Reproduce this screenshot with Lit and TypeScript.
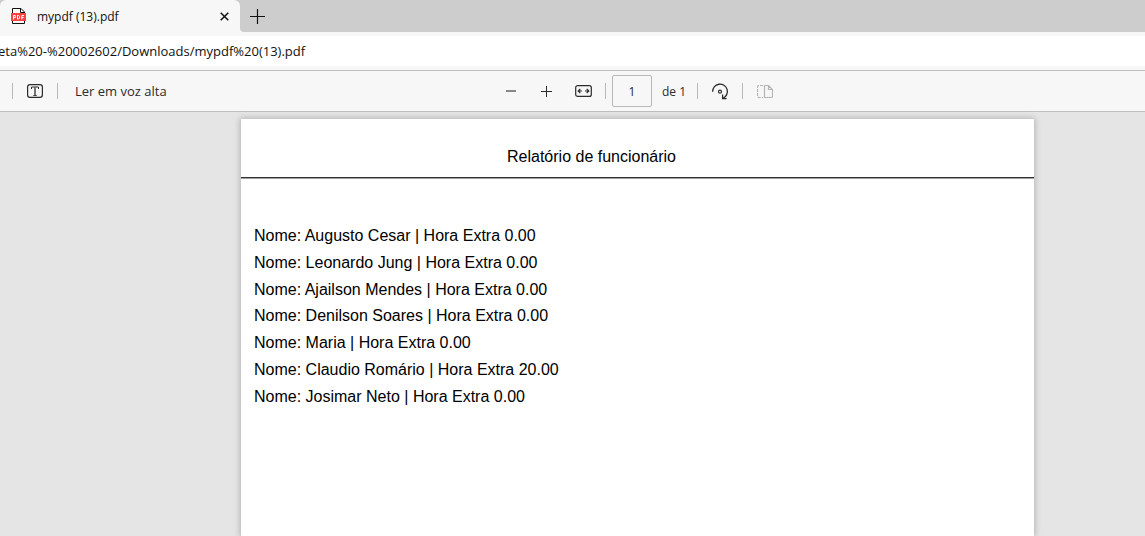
import { LitElement, html, css } from "lit";
import { customElement, property, state } from "lit/decorators.js";

interface Employee {
  name: string;
  overtime: string;
}

@customElement("browser-tabs")
class BrowserTabs extends LitElement {
  @property() label = "";

  static styles = css`
    :host {
      display: block;
      background: #f7f7f7;
    }
    .strip {
      display: flex;
      height: 32px;
    }
    .slot {
      width: 240px;
      background: #cdcdcd;
    }
    .tab {
      display: flex;
      align-items: center;
      box-sizing: border-box;
      height: 100%;
      padding: 0 8px 0 11px;
      background: #f7f7f7;
      border-radius: 6px 6px 0 0;
      color: #111;
      font-size: 12px;
    }
    .title {
      flex: 1;
      margin-left: 11px;
      white-space: nowrap;
    }
    .rest {
      display: flex;
      flex: 1;
      background: #cdcdcd;
      border-bottom-left-radius: 4px;
    }
    button {
      display: flex;
      align-items: center;
      justify-content: center;
      padding: 0;
      border: 0;
      background: none;
      color: #111;
    }
    .close {
      width: 16px;
      height: 32px;
    }
    .new {
      width: 34px;
    }
    svg {
      display: block;
    }
  `;

  render() {
    return html`
      <nav class="strip" aria-label="Guias">
        <div class="slot">
          <div class="tab">
            <svg width="15" height="16" viewBox="0 0 15 16">
              <path d="M1.5 .5H10L13.5 4V15.5H1.5Z" fill="#fff" stroke="#111" />
              <path d="M9.5 .5V4.5H13.5" fill="none" stroke="#111" />
              <rect y="5" width="15" height="8" rx=".5" fill="#f9423f" />
              <path
                d="M2.5 11.5V7.5H4.3V9.6H2.5M6.5 7.2V11.3M6.5 7.5H7.6L8.5 8.4V10.1L7.6 11H6.5M10.8 11.5V7.5H13M10.8 9.5H12.6"
                fill="none"
                stroke="#fff"
              />
            </svg>
            <span class="title">${this.label}</span>
            <button class="close" aria-label="Fechar guia">
              <svg width="9" height="9" viewBox="0 0 9 9">
                <path d="M.7 .7L8.3 8.3M8.3 .7L.7 8.3" stroke="currentColor" stroke-width="1.5" />
              </svg>
            </button>
          </div>
        </div>
        <div class="rest">
          <button class="new" aria-label="Nova guia">
            <svg width="15" height="15" viewBox="0 0 15 15">
              <path d="M7.5 0V15M0 7.5H15" stroke="currentColor" stroke-width="1.2" />
            </svg>
          </button>
        </div>
      </nav>
    `;
  }
}

@customElement("address-bar")
class AddressBar extends LitElement {
  @property() url = "";

  static styles = css`
    :host {
      display: block;
      padding: 4px 0;
      background: #f7f7f7;
      border-bottom: 1px solid #bfbfbf;
    }
    input {
      display: block;
      box-sizing: border-box;
      width: 100%;
      height: 30px;
      padding: 0;
      border: 0;
      outline: 0;
      background: #fff;
      color: #111;
      font: inherit;
      font-size: 13px;
      text-indent: -2px;
    }
  `;

  render() {
    return html`<input type="text" aria-label="Barra de endereços" .value=${this.url} />`;
  }
}

@customElement("pdf-toolbar")
class PdfToolbar extends LitElement {
  @state() page = "1";

  static styles = css`
    :host {
      display: block;
      background: #f7f7f7;
      border-bottom: 1px solid #bcbfbd;
      color: #2b2b2b;
      font-size: 13px;
    }
    .bar {
      display: grid;
      grid-template-columns: 501fr 644fr;
      height: 40px;
    }
    .group {
      display: flex;
      align-items: center;
      white-space: nowrap;
    }
    .left {
      padding-left: 12px;
    }
    .rule {
      width: 1px;
      height: 16px;
      background: #b8b8b8;
    }
    button {
      display: flex;
      align-items: center;
      justify-content: center;
      height: 32px;
      padding: 0;
      border: 0;
      background: none;
      color: inherit;
      font: inherit;
    }
    .text {
      width: 44px;
    }
    .read {
      padding: 0 17px;
    }
    .zoom {
      width: 20px;
      margin-right: 16px;
    }
    .fit {
      width: 20px;
      margin-right: 12px;
    }
    .number {
      box-sizing: border-box;
      width: 40px;
      height: 32px;
      margin: 0 10px 0 6px;
      padding: 0;
      border: 1px solid #b8b8b8;
      border-radius: 2px;
      background: #f7f7f7;
      color: inherit;
      font: inherit;
      font-size: 12px;
      text-align: center;
    }
    .count {
      width: 35px;
      font-size: 12px;
    }
    .turn {
      width: 44px;
    }
    .view {
      width: 44px;
      color: #b5b5b5;
    }
    svg {
      display: block;
      fill: none;
      stroke: currentColor;
    }
  `;

  private setPage(event: Event) {
    this.page = (event.target as HTMLInputElement).value;
  }

  render() {
    return html`
      <div class="bar" role="toolbar" aria-label="Ferramentas de PDF">
        <div class="group left">
          <span class="rule"></span>
          <button class="text" aria-label="Adicionar texto">
            <svg width="16" height="14" viewBox="0 0 16 14">
              <rect x=".6" y=".6" width="14.8" height="12.8" rx="2.4" stroke-width="1.2" />
              <path d="M4.5 5V3H11.5V5M6.3 11.5H9.7" />
              <path d="M8 3V11.5" stroke="#666" stroke-width="1.8" />
            </svg>
          </button>
          <span class="rule"></span>
          <button class="read">Ler em voz alta</button>
        </div>
        <div class="group">
          <button class="zoom" aria-label="Reduzir">
            <svg width="10" height="2" viewBox="0 0 10 2">
              <path d="M0 1H10" stroke="#888" stroke-width="2" />
            </svg>
          </button>
          <button class="zoom" aria-label="Ampliar">
            <svg width="12" height="11" viewBox="0 0 12 11"><path d="M5.5 0V11M0 5.5H11" /></svg>
          </button>
          <button class="fit" aria-label="Ajustar à largura">
            <svg width="17" height="12" viewBox="0 0 17 12">
              <rect x=".7" y=".6" width="15.6" height="10.8" rx="2" stroke-width="1.2" />
              <path d="M3.2 6H7M5.3 3.9L3.2 6L5.3 8.1M13.8 6H10M11.7 3.9L13.8 6L11.7 8.1" stroke-width="1.2" />
            </svg>
          </button>
          <span class="rule"></span>
          <input class="number" type="text" aria-label="Número da página" .value=${this.page} @input=${this.setPage} />
          <span class="count">de 1</span>
          <span class="rule"></span>
          <button class="turn" aria-label="Girar">
            <svg width="18" height="17" viewBox="0 0 18 17">
              <path d="M1.6 8.8A7.4 7.4 0 1 1 12 15.3" stroke-width="1.3" />
              <path d="M11.6 11.6V15.6H15.6" stroke-width="1.3" />
              <circle cx="9" cy="8.7" r="1.5" stroke-width="1.2" />
            </svg>
          </button>
          <span class="rule"></span>
          <button class="view" aria-label="Modo de exibição de página" disabled>
            <svg width="16" height="13" viewBox="0 0 16 13">
              <path d="M6 .5H2A1.5 1.5 0 0 0 .5 2V11A1.5 1.5 0 0 0 2 12.5H6" stroke-dasharray="3 1" stroke-width="1.2" />
              <path d="M7.5 .5H11.5L15.5 4.5V11A1.5 1.5 0 0 1 14 12.5H7.5ZM11.5 .5V4.5H15.5" stroke-width="1.2" />
            </svg>
          </button>
        </div>
      </div>
    `;
  }
}

@customElement("report-page")
class ReportPage extends LitElement {
  @property({ attribute: false }) employees: Employee[] = [];

  static styles = css`
    :host {
      display: block;
      background: #fff;
      box-shadow: 0 0 6px 1px rgba(0, 0, 0, 0.22);
      color: #000;
      font-family: "Liberation Sans", Arial, sans-serif;
      font-size: 16px;
    }
    h1 {
      margin: 0;
      padding: 28px 0 11px 266px;
      border-bottom: 1px solid #333;
      box-shadow: 0 1px #a0a0a0;
      font-size: 16px;
      font-weight: 400;
      line-height: 19px;
    }
    ul {
      display: grid;
      grid-auto-rows: 1fr;
      align-items: center;
      min-height: 187px;
      margin: 0;
      padding: 45px 13px;
      list-style: none;
    }
    li {
      line-height: 20px;
    }
  `;

  render() {
    return html`
      <h1>Relatório de funcionário</h1>
      <ul>
        ${this.employees.map((e) => html`<li>Nome: ${e.name} | Hora Extra ${e.overtime}</li>`)}
      </ul>
    `;
  }
}

@customElement("app-root")
class AppRoot extends LitElement {
  private employees: Employee[] = [
    { name: "Augusto Cesar", overtime: "0.00" },
    { name: "Leonardo Jung", overtime: "0.00" },
    { name: "Ajailson Mendes", overtime: "0.00" },
    { name: "Denilson Soares", overtime: "0.00" },
    { name: "Maria", overtime: "0.00" },
    { name: "Claudio Romário", overtime: "20.00" },
    { name: "Josimar Neto", overtime: "0.00" },
  ];

  static styles = css`
    :host {
      display: flex;
      flex-direction: column;
      height: 100vh;
      overflow: hidden;
      background: #e5e5e5;
      font-family: "Segoe UI", "Open Sans", sans-serif;
    }
    .viewer {
      display: grid;
      flex: 1;
      grid-template-columns: 241fr 793fr 111fr;
      padding-top: 7px;
    }
    .sheet {
      grid-column: 2;
    }
  `;

  render() {
    return html`
      <browser-tabs label="mypdf (13).pdf"></browser-tabs>
      <address-bar url="eta%20-%20002602/Downloads/mypdf%20(13).pdf"></address-bar>
      <pdf-toolbar></pdf-toolbar>
      <main class="viewer">
        <report-page class="sheet" .employees=${this.employees}></report-page>
      </main>
    `;
  }
}
